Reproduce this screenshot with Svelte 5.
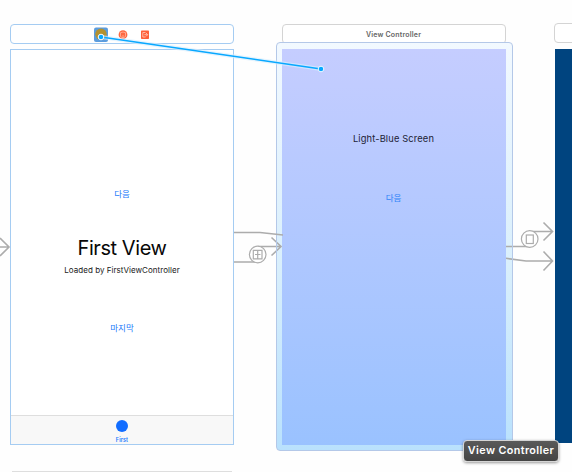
<script>
  const wires = [
    'M-4 247H9M0 238L9 247L0 256',
    'M234 232.5H260L283 235',
    'M234 262H258M258 246.5H281M271.5 237.500L281 246.500L271.500 255.500',
    'M506 246.500H530M530 231.500H552.500M543.500 222.500L552.500 231.500L543.500 240.500',
    'M506 258.300L526 261H552.500M543.500 251.500L552.500 261L543.500 270.500'
  ];
</script>

<main>
  <header class="dock first-dock">
    <svg width="60" height="17" viewBox="0 0 60 17" aria-hidden="true">
      <rect x="2" y="1.500" width="14" height="14.500" rx="2" fill="#5b9cdd" />
      <circle cx="9" cy="8.300" r="5.700" fill="#b4912e" />
      <rect x="6" y="8" width="6" height="5" fill="#9d8c4a" />
      <circle cx="31" cy="8.700" r="4.400" fill="#ff6840" />
      <path d="M28 7L31 6L34 7M31 9V12M28.500 7V10.500L31 12L33.500 10.500V7" fill="none" stroke="#ffc0ac" stroke-width=".7" />
      <rect x="49" y="4.500" width="8" height="8.500" rx=".7" fill="#ff6038" />
      <path d="M53.500 6.500H50.800V11H53.500M52.300 8.700H55.500M54 7L55.700 8.700L54 10.400" fill="none" stroke="#ffd0c2" stroke-width=".8" />
    </svg>
  </header>
  <section class="scene first">
    <span class="link next">다음</span>
    <h1>First View</h1>
    <p>Loaded by FirstViewController</p>
    <span class="link last">마지막</span>
    <nav><i></i><span>First</span></nav>
  </section>

  <header class="dock second-dock"><span>View Controller</span></header>
  <section class="scene second">
    <span class="title">Light-Blue Screen</span>
    <span class="link blue-next">다음</span>
  </section>

  <header class="dock third-dock"></header>
  <section class="scene third"></section>
  <div class="below"></div>

  <svg class="overlay" width="572" height="472" viewBox="0 0 572 472" aria-hidden="true">
    <g fill="none" stroke="#acacac" stroke-width="1.600">
      {#each wires as d}<path {d} />{/each}
      <g stroke-width="1.200">
        <circle cx="257.700" cy="254.500" r="8.300" fill="#fff" />
        <path d="M253.300 250.300H262V258.800H253.300ZM257.700 250.300V253M257.700 256V258.800M255 254.500H260.500M257.700 252.500V256.500" />
        <circle cx="529.700" cy="239" r="8.300" fill="#fff" />
        <rect x="526.300" y="235" width="7" height="8.500" />
      </g>
    </g>
    <path d="M276.500 237V257M512.500 243V262" stroke="#b4c8e8" />
    <path class="glow" d="M101 37L321 69" />
    <path d="M101 37L321 69" stroke="#08a8ff" stroke-width="1.600" />
    <circle cx="101" cy="37" r="2.800" fill="#08a8ff" stroke="#fff" stroke-width="1" />
    <circle cx="321" cy="69" r="2.800" fill="#08a8ff" stroke="#eefaff" stroke-width="1" />
  </svg>
  <div class="tooltip">View Controller</div>
</main>

<style>
  :global(body) { background: #fff; }
  main {
    position: relative;
    width: 572px;
    height: 472px;
    overflow: hidden;
    background: #fefefe;
    font-family: Inter, "Noto Sans CJK KR", sans-serif;
  }
  .dock, .scene, .below, .overlay, .tooltip { position: absolute; box-sizing: border-box; }
  .dock {
    display: flex;
    align-items: center;
    justify-content: center;
    width: 224px;
    height: 20px;
    border: 1px solid #d4d4d4;
    border-radius: 4px;
    background: #fff;
  }
  .first-dock { left: 10px; top: 24px; border-color: #a5ccf2; }
  .first-dock svg { margin-right: 1px; }
  .second-dock {
    left: 282px;
    top: 24px;
    padding-right: 1px;
    color: #656565;
    font-size: 7px;
    font-weight: 600;
    letter-spacing: .2px;
  }
  .third-dock { left: 554px; top: 23px; }
  .scene { display: flex; flex-direction: column; align-items: center; }
  .first {
    left: 10px;
    top: 49px;
    width: 224px;
    height: 396px;
    border: 1px solid #a5ccf2;
    background: #fff;
  }
  .link { height: 12px; line-height: 12px; color: #2079fa; font-size: 8.500px; white-space: nowrap; }
  .next { margin-top: 138px; }
  h1 {
    margin: 35px 0 0;
    height: 26px;
    line-height: 26px;
    color: #080808;
    font-size: 20px;
    font-weight: 400;
    letter-spacing: -.43px;
  }
  p { margin: 2px 0 0; height: 14px; line-height: 14px; color: #202020; font-size: 8px; letter-spacing: .04px; white-space: nowrap; }
  .last { margin-top: 45px; }
  nav {
    display: flex;
    flex-direction: column;
    align-items: center;
    box-sizing: border-box;
    width: 100%;
    height: 29px;
    margin-top: auto;
    padding-top: 4px;
    border-top: 1px solid #dedede;
    background: #f8f8f8;
    color: #1b7cff;
    font-size: 5.500px;
    font-weight: 600;
  }
  nav i { width: 12px; height: 12px; border-radius: 50%; background: #126dff; }
  nav span { margin-top: 4px; line-height: 8px; letter-spacing: .1px; }
  .second {
    left: 276px;
    top: 42px;
    width: 237px;
    height: 409px;
    padding-right: 2px;
    border: 1px solid #b4c8e8;
    border-radius: 4px;
    background:
      linear-gradient(#c5cdff, #9ac2ff) 5px 6px / 224px 396px no-repeat,
      linear-gradient(#f2f9ff, #d9effc 55%, #b9e1fd);
  }
  .title { margin: 88px 0 0; line-height: 16px; color: #1d2234; font-size: 9.300px; letter-spacing: .14px; white-space: nowrap; }
  .blue-next { margin-top: 45px; color: #2f83f8; }
  .third { left: 555px; top: 49px; width: 224px; height: 394px; background: #00447f; }
  .below { left: 12px; top: 471px; width: 220px; height: 1px; background: #dedede; }
  .overlay { left: 0; top: 0; }
  .glow { stroke: #d9efff; stroke-width: 4; opacity: .65; }
  .tooltip {
    left: 463px;
    top: 439.500px;
    width: 96px;
    height: 22px;
    border: 1px solid #d5d5d5;
    border-radius: 4px;
    background: linear-gradient(#5a5a5a, #444);
    box-shadow: 0 1px 3px #0006;
    color: #fff;
    font-size: 10.800px;
    font-weight: 600;
    letter-spacing: .38px;
    line-height: 20px;
    text-align: center;
    white-space: nowrap;
  }
</style>
